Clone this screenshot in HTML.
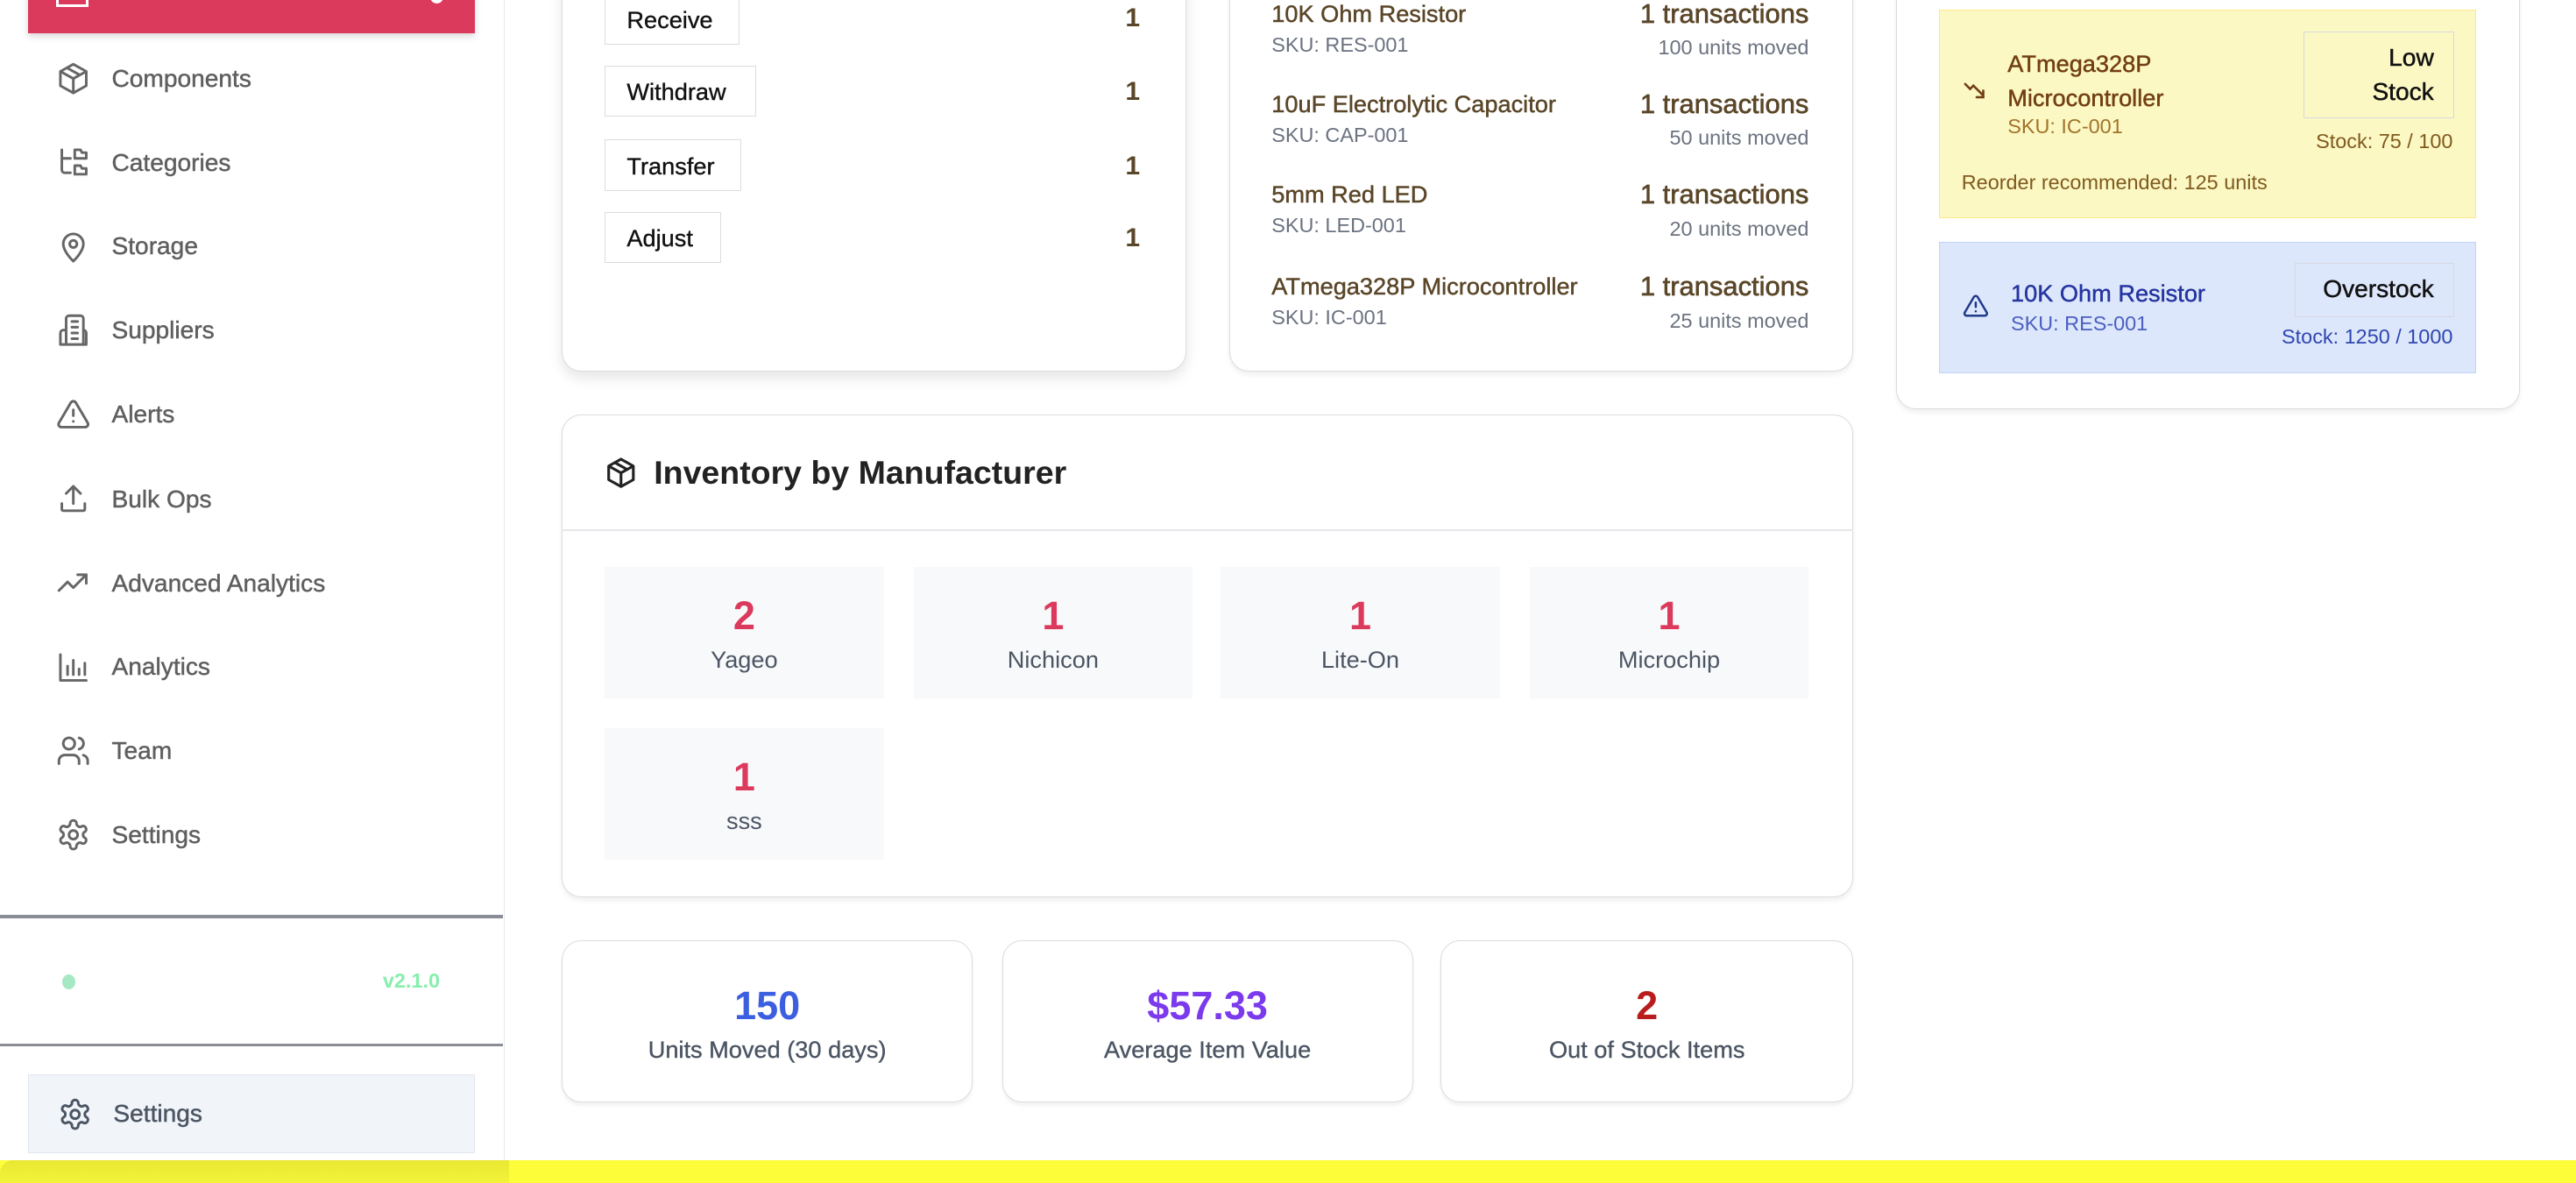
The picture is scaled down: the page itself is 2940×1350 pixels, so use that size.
<!DOCTYPE html>
<html><head><meta charset="utf-8"><style>
*{box-sizing:border-box;margin:0;padding:0}
html,body{width:2940px;height:1350px;overflow:hidden;background:#fff}
#w{zoom:1.875;width:1568px;height:720px;position:relative;font-family:"Liberation Sans",Arial,sans-serif;background:#fff}
.a{position:absolute}
.side{left:0;top:0;width:307px;height:706px;border-right:1px solid #e5e7eb;background:#fff}
.nav{position:absolute;left:34px;display:flex;align-items:center;color:#5f5f5f;font-size:15px;height:24px;-webkit-text-stroke:0.25px currentColor}
.nav svg{width:21px;height:21px;margin-right:13px;stroke:#666;fill:none;stroke-width:1.8;stroke-linecap:round;stroke-linejoin:round}
.card{position:absolute;background:#fff;border:1px solid #dcdcdc;border-radius:12px;box-shadow:0 2px 3px rgba(0,0,0,.06)}
.btn{position:absolute;left:368px;height:31px;border:1px solid #dcdcdc;font-size:14.5px;color:#111;padding:7px 13px 0;-webkit-text-stroke:0.2px #111}
.cnt{position:absolute;left:685px;font-size:16px;color:#5a4628;font-weight:bold}
.nm{position:absolute;left:774px;font-size:14.5px;color:#5a4628;-webkit-text-stroke:0.25px #5a4628}
.sku{position:absolute;left:774px;font-size:12.5px;color:#6b7280}
.tr{position:absolute;right:467px;font-size:16.5px;color:#5a4628;text-align:right;-webkit-text-stroke:0.35px #5a4628}
.um{position:absolute;right:467px;font-size:12.5px;color:#6b7280;text-align:right}
.tile{position:absolute;width:170px;height:80px;background:#f8f9fb;text-align:center}
.tile b{display:block;color:#dc3a5c;font-size:24px;margin-top:17px;line-height:26px}
.tile span{display:block;color:#4b5563;font-size:14.5px;margin-top:5px}
.stat{position:absolute;top:572px;width:250px;height:99px;background:#fff;border:1px solid #dcdcdc;border-radius:12px;text-align:center;box-shadow:0 2px 2px rgba(0,0,0,.05)}
.stat b{display:block;font-size:24px;margin-top:27px;line-height:26px}
.stat span{display:block;font-size:14.5px;color:#4b5563;margin-top:5px;-webkit-text-stroke:0.2px #4b5563}
</style></head><body><div id="w">
<div class="a side"></div>
<div class="a" style="left:17px;top:-10px;width:272px;height:30px;background:#dc3a5c;box-shadow:0 2px 4px rgba(0,0,0,.15);overflow:hidden">
<div class="a" style="left:17px;top:0;width:20px;height:14px;border:2px solid #fff;border-top:none"></div>
<div class="a" style="left:51px;top:-5px;font-size:15px;font-weight:bold;color:#fff">Dashboard</div>
<div class="a" style="left:245px;top:4px;width:8px;height:8px;border-radius:50%;background:#fff"></div>
</div>

<div class="nav" style="top:36px"><svg viewBox="0 0 24 24"><path d="M12 2l9 5v10l-9 5-9-5V7z M3 7l9 5 9-5 M12 12v10 M7.5 4.5l9 5"/></svg>Components</div>
<div class="nav" style="top:87px"><svg viewBox="0 0 24 24"><path d="M4 3v14a2 2 0 0 0 2 2h4 M4 9h6 M13 3h4l1 2h3v4h-8z M13 14h4l1 2h3v4h-8z"/></svg>Categories</div>
<div class="nav" style="top:138px"><svg viewBox="0 0 24 24"><path d="M12 22s-7-6.5-7-12a7 7 0 0 1 14 0c0 5.5-7 12-7 12z"/><circle cx="12" cy="10" r="2.5"/></svg>Storage</div>
<div class="nav" style="top:189px"><svg viewBox="0 0 24 24"><path d="M7 22V4a2 2 0 0 1 2-2h8a2 2 0 0 1 2 2v18 M7 12H5a2 2 0 0 0-2 2v8h18v-8a2 2 0 0 0-2-2h-0 M11 6h4 M11 10h4 M11 14h4 M11 18h4"/></svg>Suppliers</div>
<div class="nav" style="top:240px"><svg viewBox="0 0 24 24"><path d="M10.3 3.9L2 18a2 2 0 0 0 1.7 3h16.6a2 2 0 0 0 1.7-3L13.7 3.9a2 2 0 0 0-3.4 0z M12 9v4 M12 17h.01"/></svg>Alerts</div>
<div class="nav" style="top:292px"><svg viewBox="0 0 24 24"><path d="M4 15v4a1 1 0 0 0 1 1h14a1 1 0 0 0 1-1v-4 M12 3v12 M7 8l5-5 5 5"/></svg>Bulk Ops</div>
<div class="nav" style="top:343px"><svg viewBox="0 0 24 24"><path d="M2 17l6-6 4 4 9-9 M15 6h6v6"/></svg>Advanced Analytics</div>
<div class="nav" style="top:394px"><svg viewBox="0 0 24 24"><path d="M3 3v18h18 M8 17v-6 M12 17V7 M16 17v-4 M20 17V9"/></svg>Analytics</div>
<div class="nav" style="top:445px"><svg viewBox="0 0 24 24"><circle cx="9" cy="7" r="4"/><path d="M2 21v-2a4 4 0 0 1 4-4h6a4 4 0 0 1 4 4v2 M16 3.1a4 4 0 0 1 0 7.8 M22 21v-2a4 4 0 0 0-3-3.9"/></svg>Team</div>
<div class="nav" style="top:496px"><svg viewBox="0 0 24 24"><circle cx="12" cy="12" r="3"/><path d="M12.2 2h-.4a2 2 0 0 0-2 2v.2a2 2 0 0 1-1 1.7l-.4.3a2 2 0 0 1-2 0l-.2-.1a2 2 0 0 0-2.7.7l-.2.4a2 2 0 0 0 .7 2.7l.2.1a2 2 0 0 1 1 1.7v.5a2 2 0 0 1-1 1.7l-.2.1a2 2 0 0 0-.7 2.7l.2.4a2 2 0 0 0 2.7.7l.2-.1a2 2 0 0 1 2 0l.4.3a2 2 0 0 1 1 1.7v.2a2 2 0 0 0 2 2h.4a2 2 0 0 0 2-2v-.2a2 2 0 0 1 1-1.7l.4-.3a2 2 0 0 1 2 0l.2.1a2 2 0 0 0 2.7-.7l.2-.4a2 2 0 0 0-.7-2.7l-.2-.1a2 2 0 0 1-1-1.7v-.5a2 2 0 0 1 1-1.7l.2-.1a2 2 0 0 0 .7-2.7l-.2-.4a2 2 0 0 0-2.7-.7l-.2.1a2 2 0 0 1-2 0l-.4-.3a2 2 0 0 1-1-1.7V4a2 2 0 0 0-2-2z"/></svg>Settings</div>

<div class="a" style="left:0;top:557px;width:306px;height:2px;background:#8a8c96"></div>
<div class="a" style="left:38px;top:593px;width:8px;height:9px;border-radius:50%;background:#a7e8c4"></div>
<div class="a" style="left:233px;top:590px;font-size:12.5px;font-weight:bold;color:#86efac">v2.1.0</div>
<div class="a" style="left:0;top:635px;width:306px;height:2px;background:#8a8c96"></div>
<div class="a" style="left:17px;top:654px;width:272px;height:48px;background:#f1f4f9;border:1px solid #e2e6ee"></div>
<div class="nav" style="top:666px;left:35px;color:#4b5563"><svg viewBox="0 0 24 24" style="stroke:#4b5563"><circle cx="12" cy="12" r="3"/><path d="M12.2 2h-.4a2 2 0 0 0-2 2v.2a2 2 0 0 1-1 1.7l-.4.3a2 2 0 0 1-2 0l-.2-.1a2 2 0 0 0-2.7.7l-.2.4a2 2 0 0 0 .7 2.7l.2.1a2 2 0 0 1 1 1.7v.5a2 2 0 0 1-1 1.7l-.2.1a2 2 0 0 0-.7 2.7l.2.4a2 2 0 0 0 2.7.7l.2-.1a2 2 0 0 1 2 0l.4.3a2 2 0 0 1 1 1.7v.2a2 2 0 0 0 2 2h.4a2 2 0 0 0 2-2v-.2a2 2 0 0 1 1-1.7l.4-.3a2 2 0 0 1 2 0l.2.1a2 2 0 0 0 2.7-.7l.2-.4a2 2 0 0 0-.7-2.7l-.2-.1a2 2 0 0 1-1-1.7v-.5a2 2 0 0 1 1-1.7l.2-.1a2 2 0 0 0 .7-2.7l-.2-.4a2 2 0 0 0-2.7-.7l-.2.1a2 2 0 0 1-2 0l-.4-.3a2 2 0 0 1-1-1.7V4a2 2 0 0 0-2-2z"/></svg>Settings</div>

<!-- card 1 -->
<div class="card" style="left:342px;top:-20px;width:380px;height:246px;box-shadow:0 4px 8px rgba(0,0,0,.1)"></div>
<div class="btn" style="top:-4px;width:82px">Receive</div>
<div class="btn" style="top:40px;width:92px">Withdraw</div>
<div class="btn" style="top:85px;width:83px">Transfer</div>
<div class="btn" style="top:129px;width:71px">Adjust</div>
<div class="cnt" style="top:2px">1</div>
<div class="cnt" style="top:47px">1</div>
<div class="cnt" style="top:92px">1</div>
<div class="cnt" style="top:136px">1</div>

<!-- card 2 -->
<div class="card" style="left:748px;top:-20px;width:380px;height:246px"></div>
<div class="nm" style="top:0">10K Ohm Resistor</div><div class="sku" style="top:20px">SKU: RES-001</div>
<div class="tr" style="top:-1px">1 transactions</div><div class="um" style="top:22px">100 units moved</div>
<div class="nm" style="top:55px">10uF Electrolytic Capacitor</div><div class="sku" style="top:75px">SKU: CAP-001</div>
<div class="tr" style="top:54px">1 transactions</div><div class="um" style="top:77px">50 units moved</div>
<div class="nm" style="top:110px">5mm Red LED</div><div class="sku" style="top:130px">SKU: LED-001</div>
<div class="tr" style="top:109px">1 transactions</div><div class="um" style="top:132px">20 units moved</div>
<div class="nm" style="top:166px">ATmega328P Microcontroller</div><div class="sku" style="top:186px">SKU: IC-001</div>
<div class="tr" style="top:165px">1 transactions</div><div class="um" style="top:188px">25 units moved</div>

<!-- right card -->
<div class="card" style="left:1154px;top:-20px;width:380px;height:269px"></div>
<div class="a" style="left:1180px;top:6px;width:327px;height:127px;background:#fcf8c4;border:1px solid #fbe98a"></div>
<svg class="a" style="left:1195px;top:50px" width="16" height="14" viewBox="0 0 16 14" fill="none" stroke="#713f12" stroke-width="1.4" stroke-linecap="round"><path d="M1 1l3 3 2-2 6 6 M8 9h4V5"/></svg>
<div class="a" style="left:1222px;top:28px;font-size:14.5px;line-height:21px;color:#713f12;-webkit-text-stroke:0.25px #713f12">ATmega328P<br>Microcontroller</div>
<div class="a" style="left:1222px;top:70px;font-size:12.5px;color:#a1742a">SKU: IC-001</div>
<div class="a" style="left:1402px;top:19px;width:92px;height:53px;border:1px solid #d6d8de;font-size:15px;line-height:21px;color:#111;text-align:right;padding:5px 12px 0 0;-webkit-text-stroke:0.25px #111">Low<br>Stock</div>
<div class="a" style="right:75px;top:79px;font-size:12.5px;color:#805a1e">Stock: 75 / 100</div>
<div class="a" style="left:1194px;top:104px;font-size:12.5px;color:#805a1e">Reorder recommended: 125 units</div>

<div class="a" style="left:1180px;top:147px;width:327px;height:80px;background:#dde7fb;border:1px solid #bfd3f8"></div>
<svg class="a" style="left:1194px;top:178px" width="17" height="16" viewBox="0 0 24 24" fill="none" stroke="#1e3a8a" stroke-width="2" stroke-linecap="round" stroke-linejoin="round"><path d="M10.3 3.9L2 18a2 2 0 0 0 1.7 3h16.6a2 2 0 0 0 1.7-3L13.7 3.9a2 2 0 0 0-3.4 0z M12 9v4 M12 17h.01"/></svg>
<div class="a" style="left:1224px;top:170px;font-size:14.5px;color:#2535a0;-webkit-text-stroke:0.25px #2535a0">10K Ohm Resistor</div>
<div class="a" style="left:1224px;top:190px;font-size:12.5px;color:#4b5fc0">SKU: RES-001</div>
<div class="a" style="left:1397px;top:160px;width:97px;height:33px;border:1px solid #d6d8de;font-size:15px;color:#111;text-align:right;padding:7px 12px 0 0;-webkit-text-stroke:0.25px #111">Overstock</div>
<div class="a" style="right:75px;top:198px;font-size:12.5px;color:#2f46b0">Stock: 1250 / 1000</div>

<!-- manufacturer -->
<div class="card" style="left:342px;top:252px;width:786px;height:294px"></div>
<div class="a" style="left:342px;top:322px;width:786px;height:1px;background:#e5e7eb"></div>
<svg class="a" style="left:368px;top:277px" width="20" height="22" viewBox="0 0 24 24" fill="none" stroke="#222" stroke-width="2" stroke-linejoin="round"><path d="M12 2l9 5v10l-9 5-9-5V7z M3 7l9 5 9-5 M12 12v10 M7.5 4.5l9 5"/></svg>
<div class="a" style="left:398px;top:276px;font-size:20px;font-weight:bold;color:#222">Inventory by Manufacturer</div>
<div class="tile" style="left:368px;top:345px"><b>2</b><span>Yageo</span></div>
<div class="tile" style="left:556px;top:345px"><b>1</b><span>Nichicon</span></div>
<div class="tile" style="left:743px;top:345px"><b>1</b><span>Lite-On</span></div>
<div class="tile" style="left:931px;top:345px"><b>1</b><span>Microchip</span></div>
<div class="tile" style="left:368px;top:443px"><b>1</b><span>sss</span></div>

<div class="stat" style="left:342px"><b style="color:#3b5fe0">150</b><span>Units Moved (30 days)</span></div>
<div class="stat" style="left:610px"><b style="color:#7c3aed">$57.33</b><span>Average Item Value</span></div>
<div class="stat" style="left:877px;width:251px"><b style="color:#b91c1c">2</b><span>Out of Stock Items</span></div>

<div class="a" style="left:0;top:706px;width:1568px;height:14px;background:#fdfd3a"></div>
<div class="a" style="left:0;top:706px;width:310px;height:14px;background:linear-gradient(#e8e833,#f3f33a);border-top-left-radius:8px"></div>
</div></body></html>
